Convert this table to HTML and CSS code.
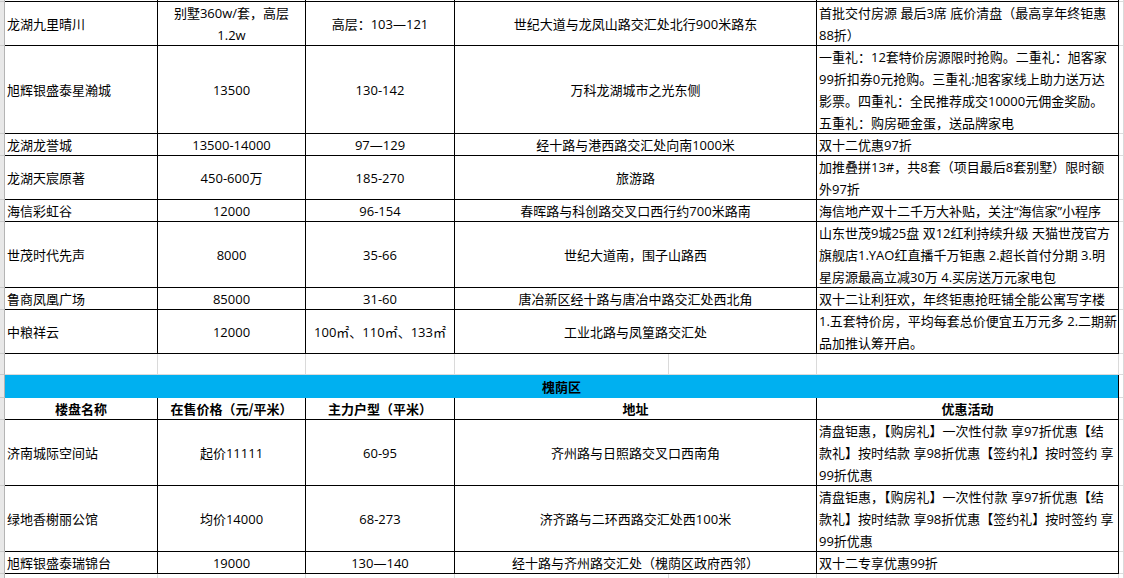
FILE: index.html
```html
<!DOCTYPE html>
<html lang="zh-CN">
<head>
<meta charset="utf-8">
<title>楼盘优惠</title>
<link rel="stylesheet" href="styles.css">
</head>
<body>
<div class="sheet">
  <!-- row 0 (clipped end of previous row) -->
  <div class="rh"></div><div class="c"></div><div class="c"></div><div class="c"></div><div class="c addr"></div><div class="c"></div><div class="tail"></div>

  <div class="rh"></div>
  <div class="c l">龙湖九里晴川</div>
  <div class="c m"><span>别墅360w/套，高层<br>1.2w</span></div>
  <div class="c m">高层：103—121</div>
  <div class="c m addr">世纪大道与龙凤山路交汇处北行900米路东</div>
  <div class="c l"><span>首批交付房源 最后3席 底价清盘（最高享年终钜惠<br>88折）</span></div>
  <div class="tail"></div>

  <div class="rh"></div>
  <div class="c l">旭辉银盛泰星瀚城</div>
  <div class="c m">13500</div>
  <div class="c m">130-142</div>
  <div class="c m addr">万科龙湖城市之光东侧</div>
  <div class="c l"><span>一重礼：12套特价房源限时抢购。二重礼：旭客家<br>99折扣券0元抢购。三重礼:旭客家线上助力送万达<br>影票。四重礼：全民推荐成交10000元佣金奖励。<br>五重礼：购房砸金蛋，送品牌家电</span></div>
  <div class="tail"></div>

  <div class="rh"></div>
  <div class="c l">龙湖龙誉城</div>
  <div class="c m">13500-14000</div>
  <div class="c m">97—129</div>
  <div class="c m addr">经十路与港西路交汇处向南1000米</div>
  <div class="c l">双十二优惠97折</div>
  <div class="tail"></div>

  <div class="rh"></div>
  <div class="c l">龙湖天宸原著</div>
  <div class="c m">450-600万</div>
  <div class="c m">185-270</div>
  <div class="c m addr">旅游路</div>
  <div class="c l"><span>加推叠拼13#，共8套（项目最后8套别墅）限时额<br>外97折</span></div>
  <div class="tail"></div>

  <div class="rh"></div>
  <div class="c l">海信彩虹谷</div>
  <div class="c m">12000</div>
  <div class="c m">96-154</div>
  <div class="c m addr">春晖路与科创路交叉口西行约700米路南</div>
  <div class="c l">海信地产双十二千万大补贴，关注“海信家”小程序</div>
  <div class="tail"></div>

  <div class="rh"></div>
  <div class="c l">世茂时代先声</div>
  <div class="c m">8000</div>
  <div class="c m">35-66</div>
  <div class="c m addr">世纪大道南，围子山路西</div>
  <div class="c l"><span>山东世茂9城25盘 双12红利持续升级 天猫世茂官方<br>旗舰店1.YAO红直播千万钜惠 2.超长首付分期 3.明<br>星房源最高立减30万 4.买房送万元家电包</span></div>
  <div class="tail"></div>

  <div class="rh"></div>
  <div class="c l">鲁商凤凰广场</div>
  <div class="c m">85000</div>
  <div class="c m">31-60</div>
  <div class="c m addr">唐冶新区经十路与唐冶中路交汇处西北角</div>
  <div class="c l">双十二让利狂欢，年终钜惠抢旺铺全能公寓写字楼</div>
  <div class="tail"></div>

  <div class="rh"></div>
  <div class="c l">中粮祥云</div>
  <div class="c m">12000</div>
  <div class="c m">100㎡、110㎡、133㎡</div>
  <div class="c m addr">工业北路与凤篁路交汇处</div>
  <div class="c l"><span>1.五套特价房，平均每套总价便宜五万元多 2.二期新<br>品加推认筹开启。</span></div>
  <div class="tail"></div>

  <!-- empty spreadsheet row -->
  <div class="rh"></div><div class="g"></div><div class="g"></div><div class="g"></div><div class="g"></div><div class="g"></div><div class="g"></div><div class="tail"></div>

  <!-- district band -->
  <div class="rh"></div>
  <div class="band">槐荫区</div>
  <div class="tail"></div>

  <div class="rh"></div>
  <div class="c m b">楼盘名称</div>
  <div class="c m b">在售价格（元/平米）</div>
  <div class="c m b">主力户型（平米）</div>
  <div class="c m b addr">地址</div>
  <div class="c m b">优惠活动</div>
  <div class="tail"></div>

  <div class="rh"></div>
  <div class="c l">济南城际空间站</div>
  <div class="c m">起价11111</div>
  <div class="c m">60-95</div>
  <div class="c m addr">齐州路与日照路交叉口西南角</div>
  <div class="c l"><span>清盘钜惠，【购房礼】一次性付款 享97折优惠【结<br>款礼】按时结款 享98折优惠【签约礼】按时签约 享<br>99折优惠</span></div>
  <div class="tail"></div>

  <div class="rh"></div>
  <div class="c l">绿地香榭丽公馆</div>
  <div class="c m">均价14000</div>
  <div class="c m">68-273</div>
  <div class="c m addr">济齐路与二环西路交汇处西100米</div>
  <div class="c l"><span>清盘钜惠，【购房礼】一次性付款 享97折优惠【结<br>款礼】按时结款 享98折优惠【签约礼】按时签约 享<br>99折优惠</span></div>
  <div class="tail"></div>

  <div class="rh"></div>
  <div class="c l">旭辉银盛泰瑞锦台</div>
  <div class="c m">19000</div>
  <div class="c m">130—140</div>
  <div class="c m addr">经十路与齐州路交汇处（槐荫区政府西邻）</div>
  <div class="c l">双十二专享优惠99折</div>
  <div class="tail"></div>

  <!-- next (clipped) row -->
  <div class="rh"></div><div class="g"></div><div class="g"></div><div class="g"></div><div class="g"></div><div class="g"></div><div class="g"></div><div class="tail"></div>
</div>
</body>
</html>
```
FILE: styles.css
```css
html, body {
  margin: 0;
  padding: 0;
  background: #ffffff;
}
body {
  width: 1124px;
  height: 578px;
  overflow: hidden;
  font-family: "Open Sans", "Noto Sans CJK SC", sans-serif;
  font-size: 13px;
  color: #000000;
}
.sheet {
  display: grid;
  grid-template-columns: 5px 153px 148px 149px 214px 148px 302px 5px;
  grid-template-rows: 2px 44px 88px 22px 44px 22px 66px 22px 44px 21px 23px 22px 66px 66px 22px 22px;
}
.sheet > div {
  box-sizing: border-box;
  min-width: 0;
}
.rh {
  background: #e8e8e8;
  border-right: 1px solid #b4b4b4;
  border-bottom: 1px solid #cacaca;
}
.c {
  border-right: 1px solid #000000;
  border-bottom: 1px solid #000000;
  padding: 0 2px;
  display: flex;
  align-items: center;
  line-height: 22px;
  overflow: hidden;
  white-space: nowrap;
}
.l {
  justify-content: flex-start;
  text-align: left;
}
.m {
  justify-content: center;
  text-align: center;
}
.b {
  font-family: "Noto Sans CJK SC", sans-serif;
  font-weight: 700;
}
.addr {
  grid-column: span 2;
}
.g {
  border-right: 1px solid #dadada;
  border-bottom: 1px solid #dadada;
}
.tail {
  border-right: 1px solid #dadada;
  border-bottom: 1px solid #dadada;
}
.band {
  grid-column: span 6;
  background: #00b0f0;
  border-right: 1px solid #000000;
  display: flex;
  align-items: center;
  justify-content: center;
  font-family: "Noto Sans CJK SC", sans-serif;
  font-weight: 700;
  line-height: 22px;
}
```
